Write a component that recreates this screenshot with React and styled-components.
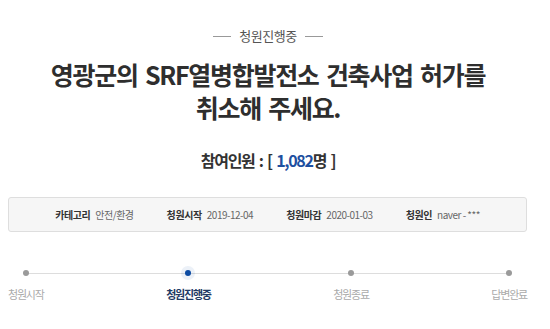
import React from "react";
import styled, { createGlobalStyle } from "styled-components";

const Global = createGlobalStyle`
  html, body { margin: 0; padding: 0; background: #fff; }
  body { font-family: "Noto Sans CJK KR", "Noto Sans", sans-serif; color: #333; }
`;

const Page = styled.div`
  width: 536px;
  padding-top: 28px;
  display: flex;
  flex-direction: column;
  align-items: center;
`;

const Status = styled.div`
  display: flex;
  align-items: center;
  gap: 8px;
  font-size: 13px;
  line-height: 16px;
  color: #555;
  letter-spacing: -0.5px;
  &::before, &::after {
    content: "";
    width: 18px;
    height: 1px;
    background: #999;
  }
`;

const Title = styled.h1`
  margin: 14px 0 0;
  font-size: 25px;
  line-height: 33px;
  font-weight: 700;
  color: #2e2e2e;
  text-align: center;
  letter-spacing: -1.3px;
  word-spacing: 3px;
`;

const Count = styled.div`
  margin-top: 25px;
  font-size: 16px;
  line-height: 22px;
  font-weight: 700;
  color: #333;
  letter-spacing: -1.3px;
  word-spacing: 2px;
`;

const Num = styled.span`
  color: #1e4fa0;
`;

const InfoBox = styled.div`
  box-sizing: border-box;
  align-self: flex-start;
  margin: 26px 0 0 8px;
  width: 519px;
  height: 35px;
  background: #f6f6f6;
  border: 1px solid #dedede;
  border-radius: 3px;
  display: flex;
  align-items: center;
  justify-content: center;
  gap: 33px;
  font-size: 10px;
`;

const InfoItem = styled.div`
  display: flex;
  align-items: baseline;
  gap: 5px;
`;

const Label = styled.span`
  font-weight: 700;
  color: #333;
  letter-spacing: -0.4px;
`;

const Value = styled.span`
  color: #666;
  letter-spacing: -0.5px;
`;

const Steps = styled.div`
  position: relative;
  align-self: flex-start;
  margin: 38px 0 0 8px;
  width: 519px;
  display: flex;
  justify-content: space-between;
  &::before {
    content: "";
    position: absolute;
    left: 17px;
    right: 17px;
    top: 3px;
    height: 1px;
    background: #ddd;
  }
`;

const Step = styled.div`
  display: flex;
  flex-direction: column;
  align-items: center;
  gap: 10px;
  position: relative;
`;

const Dot = styled.span`
  width: 6px;
  height: 6px;
  border-radius: 50%;
  background: ${p => (p.$active ? "#0b4aa2" : "#9a9a9a")};
  box-shadow: ${p => (p.$active ? "0 0 0 4px rgba(11,74,162,0.08)" : "none")};
`;

const StepLabel = styled.span`
  font-size: 11px;
  line-height: 16px;
  letter-spacing: -1.2px;
  color: ${p => (p.$active ? "#1f3a64" : "#aaa")};
  font-weight: ${p => (p.$active ? 700 : 400)};
`;

const info = [
  ["카테고리", "안전/환경"],
  ["청원시작", "2019-12-04"],
  ["청원마감", "2020-01-03"],
  ["청원인", "naver - ***"],
];

const steps = [
  ["청원시작", false],
  ["청원진행중", true],
  ["청원종료", false],
  ["답변완료", false],
];

export default function App() {
  return (
    <>
      <Global />
      <Page>
        <Status>청원진행중</Status>
        <Title>
          영광군의 SRF열병합발전소 건축사업 허가를
          <br />
          취소해 주세요.
        </Title>
        <Count>
          참여인원 : [ <Num>1,082</Num>명 ]
        </Count>
        <InfoBox>
          {info.map(([l, v]) => (
            <InfoItem key={l}>
              <Label>{l}</Label>
              <Value>{v}</Value>
            </InfoItem>
          ))}
        </InfoBox>
        <Steps>
          {steps.map(([l, a]) => (
            <Step key={l}>
              <Dot $active={a} />
              <StepLabel $active={a}>{l}</StepLabel>
            </Step>
          ))}
        </Steps>
      </Page>
    </>
  );
}
